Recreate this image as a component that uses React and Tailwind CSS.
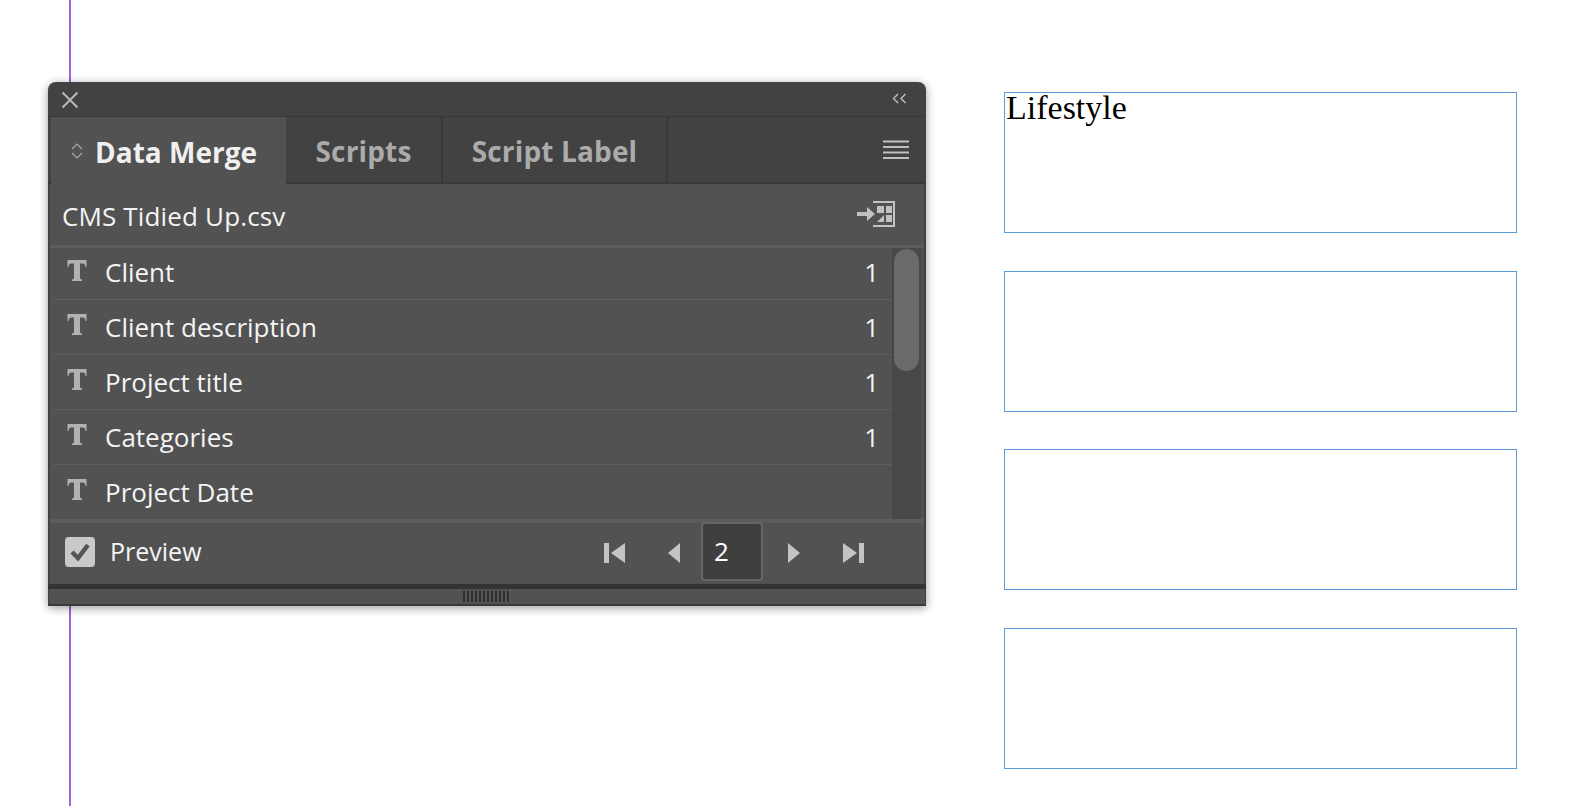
const sans = { fontFamily: '"Open Sans", "Noto Sans", sans-serif' };

function TIcon() {
  return (
    <svg width="20" height="24" viewBox="0 0 20 24" className="shrink-0">
      <path d="M.5 1h19v7h-1c-.3-2.500-1-3.500-3-3.500H13v14.500c0 1 .6 1.300 2 1.500V22H5v-1.500c1.400-.2 2-.5 2-1.500V4.500H4.500c-2 0-2.700 1-3 3.500h-1z" fill="#b2b2b2" />
    </svg>
  );
}

function Row({ name, count, height, last }) {
  return (
    <div className={`${height} shrink-0 pl-[14px] pr-[13px] flex items-center ${last ? "" : "border-b border-[#5e5e5e]"}`}>
      <div className="-mt-[4px]"><TIcon /></div>
      <span className="ml-[18px] text-[26px] text-[#f4f4f4]">{name}</span>
      <span className="ml-auto text-[26px] text-[#f4f4f4]">{count}</span>
    </div>
  );
}

function Tab({ label, width }) {
  return (
    <div className={`${width} h-full flex items-center justify-center pt-[3px] border-r-2 border-[#383838] text-[#ababab] text-[28px] font-bold tracking-[0.15px]`}>
      {label}
    </div>
  );
}

function Box({ children }) {
  return <div className="h-[141px] w-[513px] border border-[#5a9ad8] bg-white">{children}</div>;
}

export default function App() {
  return (
    <div className="relative h-[806px] w-[1588px] bg-white overflow-hidden flex items-start" style={sans}>
      <div className="absolute left-[69px] top-0 h-full w-[2px] bg-[#a262d4]" />

      <div className="relative ml-[48px] mt-[82px] w-[878px] h-[524px] flex flex-col rounded-t-[8px] bg-[#424242] shadow-[0_2px_10px_rgba(0,0,0,0.4)] border-b-2 border-[#3a3a3a]">
        <div className="h-[35px] flex items-center justify-between pl-[13px] pr-[19px] pt-[1px] shrink-0 border-b border-[#383838]">
          <svg width="18" height="18" viewBox="0 0 18 18">
            <path d="M1.500 1.500l15 15M16.500 1.500l-15 15" stroke="#b8b8b8" strokeWidth="2" />
          </svg>
          <svg width="15" height="11" viewBox="0 0 15 11" className="-mt-[2px]">
            <path d="M6 1L1.500 5.500 6 10M13.500 1L9 5.500l4.500 4.500" stroke="#c4c4c4" strokeWidth="1.300" fill="none" />
          </svg>
        </div>

        <div className="h-[67px] flex items-center shrink-0 pl-[3px] border-b-2 border-[#383838]">
          <div className="w-[235px] h-[67px] mb-[-2px] flex items-center bg-[#525252] pl-[19px] pt-[3px] text-[#f0f0f0] text-[28px] font-bold z-10">
            <svg width="14" height="18" viewBox="0 0 14 18" className="mr-[11px] -mt-[3px]">
              <path d="M2 7l5-5 5 5M2 11l5 5 5-5" stroke="#aaaaaa" strokeWidth="1.200" fill="none" />
            </svg>
            Data Merge
          </div>
          <Tab label="Scripts" width="w-[157px]" />
          <Tab label="Script Label" width="w-[225px]" />
          <svg width="26" height="19" viewBox="0 0 26 19" className="ml-auto mr-[17px]">
            <path d="M0 1.500h26M0 7h26M0 12.500h26M0 18h26" stroke="#c0c0c0" strokeWidth="2" />
          </svg>
        </div>

        <div className="mx-[2px] flex-1 min-h-0 flex flex-col bg-[#525252]">
          <div className="h-[64px] shrink-0 flex items-center pl-[12px] pr-[29px] pt-[3px] text-[26px] tracking-[0.15px] text-[#f4f4f4] border-b-[3px] border-[#5c5c5c]">
            CMS Tidied Up.csv
            <svg width="38" height="26" viewBox="0 0 38 26" className="ml-auto -mt-[4px]">
              <path d="M16 1h21v24H16" stroke="#c2c2c2" strokeWidth="2" fill="none" />
              <path d="M0 11h10V6l8 7-8 7v-5H0z" fill="#c2c2c2" />
              <path d="M20 5h7v7h-7zM29 5h6v7h-6zM29 14h6v7h-6zM27 14v7h-7z" fill="#c2c2c2" />
            </svg>
          </div>

          <div className="h-[275px] shrink-0 flex pl-[3px] pr-[3px] border-b-[4px] border-[#5c5c5c]">
            <div className="flex-1 flex flex-col">
              <Row name="Client" count="1" height="h-[52px] pb-[2px]" />
              <Row name="Client description" count="1" height="h-[55px]" />
              <Row name="Project title" count="1" height="h-[55px]" />
              <Row name="Categories" count="1" height="h-[55px]" />
              <Row name="Project Date" height="h-[54px]" last />
            </div>
            <div className="w-[29px] bg-[#484848] pt-[1px] px-[2px]">
              <div className="h-[122px] rounded-full bg-[#6a6a6a]" />
            </div>
          </div>

          <div className="flex-1 min-h-0 flex items-center pl-[15px] text-[25px] text-[#f4f4f4]">
            <div className="mb-[3px] w-[30px] h-[30px] rounded-[4px] bg-[#c9c9c9] flex items-center justify-center">
              <svg width="22" height="20" viewBox="0 0 22 20">
                <path d="M3 10l6 6 10-13" stroke="#555555" strokeWidth="4.500" fill="none" />
              </svg>
            </div>
            <span className="ml-[15px] mb-[3px]">Preview</span>
            <div className="ml-auto flex items-center mr-[60px]">
              <svg width="21" height="20" viewBox="0 0 21 20" className="mb-[2px]"><path d="M0 0h5v20H0zM21 0v20L7 10z" fill="#c4c4c4" /></svg>
              <svg width="12" height="20" viewBox="0 0 12 20" className="ml-[43px] mb-[2px]"><path d="M12 0v20L0 10z" fill="#c4c4c4" /></svg>
              <div className="ml-[21px] -mt-[4px] w-[62px] h-[59px] rounded-[4px] border-2 border-[#666666] bg-[#3f3f3f] pl-[11px] flex items-center text-white text-[26px]">2</div>
              <svg width="12" height="20" viewBox="0 0 12 20" className="ml-[25px] mb-[2px]"><path d="M0 0v20L12 10z" fill="#c4c4c4" /></svg>
              <svg width="21" height="20" viewBox="0 0 21 20" className="ml-[43px] mb-[2px]"><path d="M16 0h5v20h-5zM0 0v20L14 10z" fill="#c4c4c4" /></svg>
            </div>
          </div>
        </div>

        <div className="h-[5px] bg-[#333333] shrink-0" />
        <div className="mx-[1px] h-[15px] bg-[#525252] shrink-0 flex items-center justify-center">
          <div className="w-[48px] h-[11px] bg-[repeating-linear-gradient(90deg,#2f2f2f_0_2px,#555555_2px_4px)]" />
        </div>
      </div>

      <div className="ml-[78px] mt-[92px] flex flex-col gap-[37.5px]">
        <Box>
          <div className="pl-[1px] text-[34px] leading-[30px] text-black" style={{ fontFamily: '"Liberation Serif", serif' }}>Lifestyle</div>
        </Box>
        <Box />
        <Box />
        <Box />
      </div>
    </div>
  );
}
